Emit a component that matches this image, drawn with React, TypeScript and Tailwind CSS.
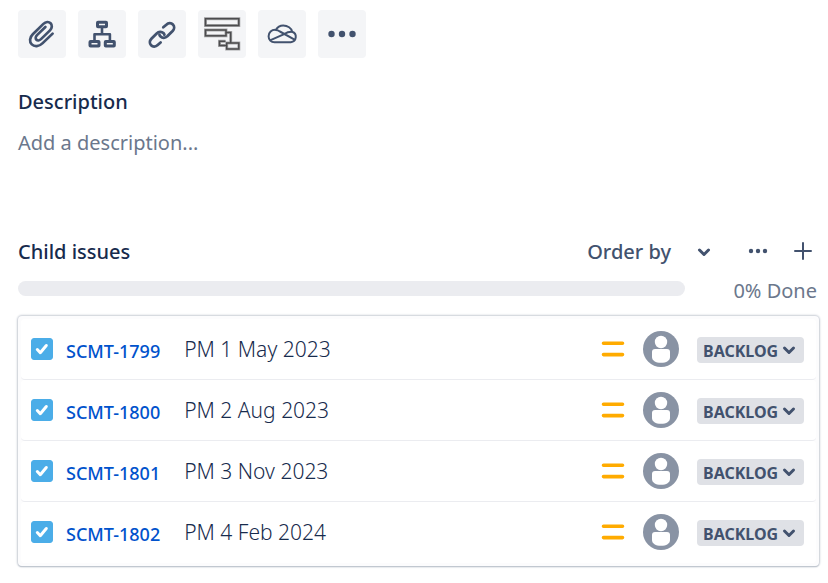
import { useState } from 'react'

type Issue = { id: string; title: string; status: string; selected: boolean }

const initialIssues: Issue[] = [
  { id: 'SCMT-1799', title: 'PM 1 May 2023', status: 'BACKLOG', selected: true },
  { id: 'SCMT-1800', title: 'PM 2 Aug 2023', status: 'BACKLOG', selected: true },
  { id: 'SCMT-1801', title: 'PM 3 Nov 2023', status: 'BACKLOG', selected: true },
  { id: 'SCMT-1802', title: 'PM 4 Feb 2024', status: 'BACKLOG', selected: true },
]

function AttachIcon() {
  return (
    <svg width="48" height="48" viewBox="0 0 48 48" fill="none" stroke="currentColor" strokeWidth="2.7" strokeLinecap="round" strokeLinejoin="round">
      <path d="M34.6 23.6 24.4 33.4c-3.4 3.3-8 3.6-10.6 1-2.6-2.6-2.3-7 1-10.2l10.6-10.3c2.3-2.2 5.4-2.4 7.2-.6 1.8 1.8 1.6 4.9-.6 7.1l-9 8.7c-1.5 1.5-3.5 1.7-4.6.6-1.100-1.100-.9-3.100.6-4.600l8.400-8.100" />
    </svg>
  )
}

function ChildIssueIcon() {
  return (
    <svg width="48" height="48" viewBox="0 0 48 48" fill="none" stroke="currentColor" strokeWidth="3" strokeLinejoin="round">
      <rect x="19.5" y="12.2" width="9" height="4.6" rx="0.5" />
      <rect x="12" y="31.5" width="9" height="4.6" rx="0.5" />
      <rect x="27.3" y="31.5" width="9" height="4.6" rx="0.5" />
      <path d="M24 17v7M16.5 31v-6.800h15.400V31" strokeWidth="2.6" />
    </svg>
  )
}

function LinkIcon() {
  return (
    <svg width="48" height="48" viewBox="0 0 48 48" fill="none" stroke="currentColor" strokeWidth="2.8" strokeLinecap="round">
      <path d="M25.3 17.3l3-2.6c2-1.9 4.9-2 6.6-.3 1.7 1.7 1.6 4.6-.3 6.6l-5.3 5.3c-2 1.9-5 2-6.7.3-.5-.5-.9-1.1-1.1-1.8" />
      <path d="M22.6 32.5l-2.9 2.5c-2 1.9-4.9 2-6.6.3-1.7-1.7-1.6-4.6.3-6.6l5.3-5.2c2-1.9 4.9-2.1 6.7-.4.5.5.8 1 1 1.6" />
    </svg>
  )
}

function GanttShapes() {
  return (
    <>
      <rect x="7.5" y="8.7" width="33.3" height="6.8" />
      <rect x="7.5" y="20" width="20.5" height="5.8" />
      <path d="M28 22.5h4.700V33M27.500 31.200H21.500v4.200H28" />
      <rect x="28.7" y="33" width="12.1" height="6" />
    </>
  )
}

function GanttIcon() {
  return (
    <svg width="48" height="48" viewBox="0 0 48 48" fill="none">
      <g stroke="#a8a9ab" strokeWidth="3"><GanttShapes /></g>
      <g stroke="#4c4c4e" strokeWidth="1.5"><GanttShapes /></g>
    </svg>
  )
}

function CloudIcon() {
  return (
    <svg width="48" height="48" viewBox="0 0 48 48" fill="none" stroke="currentColor" strokeWidth="2" strokeLinejoin="round">
      <path d="M16.5 32.2h16.3a5.4 5.4 0 0 0 1.3-10.5C33.6 18 29.5 15.6 25.2 15.6c-3 0-5.8 1.6-7.3 4.3-4.4-.4-7.3 2.7-7.3 6.3 0 3.5 2.5 6 5.9 6z" />
      <path d="M17.700 20c1.600 0 2.800.5 4.200 1.500L37 29.800M12 30.300l14.200-6.200c2.300-1.500 4.900-2.500 8-2.300" />
    </svg>
  )
}

function MoreIcon() {
  return (
    <svg width="48" height="48" viewBox="0 0 48 48" fill="currentColor">
      <circle cx="13.5" cy="24" r="3.2" />
      <circle cx="24" cy="24" r="3.2" />
      <circle cx="34.5" cy="24" r="3.2" />
    </svg>
  )
}

function ChevronIcon({ className = '' }: { className?: string }) {
  return (
    <svg width="14" height="14" viewBox="0 0 14 14" fill="none" stroke="currentColor" strokeWidth="3" strokeLinecap="round" strokeLinejoin="round" className={className}>
      <path d="M2.5 5 7 9.5 11.5 5" />
    </svg>
  )
}

function PriorityIcon() {
  return (
    <svg width="24" height="24" viewBox="0 0 24 24" stroke="#ffab00" strokeWidth="3.6" strokeLinecap="round" role="img" aria-label="Medium priority">
      <path d="M2.5 6.3h19M2.5 17.6h19" />
    </svg>
  )
}

function AvatarIcon() {
  return (
    <svg width="36" height="36" viewBox="0 0 36 36" role="img" aria-label="Unassigned">
      <circle cx="18" cy="18" r="18" fill="#8993a4" />
      <circle cx="18" cy="11" r="6.2" fill="#fff" />
      <path d="M9 21a3 3 0 0 1 3-3h12a3 3 0 0 1 3 3v5c0 3.5-3.5 5.8-9 5.8S9 29.5 9 26z" fill="#fff" />
    </svg>
  )
}

const tools = [
  { label: 'Attach', Icon: AttachIcon },
  { label: 'Add a child issue', Icon: ChildIssueIcon },
  { label: 'Link issue', Icon: LinkIcon },
  { label: 'Gantt chart', Icon: GanttIcon },
  { label: 'OneDrive', Icon: CloudIcon },
  { label: 'More actions', Icon: MoreIcon },
]

export default function App() {
  const [issues, setIssues] = useState<Issue[]>(initialIssues)

  const update = (id: string, patch: Partial<Issue>) => {
    setIssues(issues.map(i => (i.id === id ? { ...i, ...patch } : i)))
  }

  const done = Math.round((issues.filter(i => i.status === 'DONE').length / issues.length) * 100)
  const headingCls = 'text-[20px] leading-7 font-medium text-[#172b4d]'

  return (
    <main className="min-h-screen bg-white pt-[10px] pb-4 pl-[18px] pr-[9px] font-['Noto_Sans','Open_Sans',sans-serif] text-[#42526e]">
      {/* TOOLBAR */}
      <div className="flex gap-3">
        {tools.map(({ label, Icon }) => (
          <button key={label} type="button" aria-label={label} className="size-12 rounded-[4px] bg-[#f4f5f7] hover:bg-[#ebecf0]">
            <Icon />
          </button>
        ))}
      </div>

      {/* DESCRIPTION */}
      <section className="mt-[30px]">
        <h2 className={headingCls}>Description</h2>
        <button type="button" className="mt-[13px] block text-[20px] leading-7 text-[#6b778c]">Add a description...</button>
      </section>

      {/* CHILD ISSUES */}
      <section className="mt-[81px]">
        <div className="flex items-center">
          <h2 className={headingCls}>Child issues</h2>
          <button type="button" aria-haspopup="menu" className="ml-auto flex items-center gap-[26px] text-[20px] leading-7 font-medium">
            Order by
            <ChevronIcon />
          </button>
          <button type="button" aria-label="More" className="ml-9">
            <svg width="22" height="22" viewBox="0 0 22 22" fill="currentColor">
              <circle cx="4" cy="10" r="2.2" />
              <circle cx="11" cy="10" r="2.2" />
              <circle cx="18" cy="10" r="2.2" />
            </svg>
          </button>
          <button type="button" aria-label="Create child issue" className="ml-6 mr-[6px]">
            <svg width="20" height="20" viewBox="0 0 20 20" fill="none" stroke="currentColor" strokeWidth="2" strokeLinecap="round">
              <path d="M10 1v16M2 9h16" />
            </svg>
          </button>
        </div>

        <div className="mt-[11px] flex items-start">
          <div role="progressbar" aria-label="Done" aria-valuenow={done} aria-valuemin={0} aria-valuemax={100} className="mt-1 h-[15px] flex-1 overflow-hidden rounded-full bg-[#ebecf0]">
            <div className="h-full bg-[#36b37e]" style={{ width: `${done}%` }} />
          </div>
          <span className="w-[134px] pr-[2px] text-right text-[20px] leading-7 text-[#6b778c]">{done}% Done</span>
        </div>

        <ul className="mt-[11px] rounded-[4px] bg-[#fcfcfd] px-[3px] pt-[3px] pb-[3px] shadow-[0_0_2px_1px_#c9ced6,0_1px_1px_#a5adba]">
          {issues.map(issue => (
            <li key={issue.id} className="flex h-[61px] items-center rounded-[4px] border-b border-[#ebecf0] bg-white pl-[10px] pr-3 last:border-transparent">
              <label className="grid size-[22px] shrink-0 place-items-center">
                <input
                  type="checkbox"
                  checked={issue.selected}
                  onChange={e => update(issue.id, { selected: e.target.checked })}
                  aria-label={`Select ${issue.id}`}
                  className="col-start-1 row-start-1 size-[22px] appearance-none rounded-[3px] border border-[#4bade8] bg-white checked:bg-[#4bade8]"
                />
                <svg width="22" height="22" viewBox="0 0 22 22" fill="none" stroke="#fff" strokeWidth="3" strokeLinecap="round" strokeLinejoin="round" className="pointer-events-none col-start-1 row-start-1">
                  <path d="M6.3 11.5 9.3 14.7 15.3 7.5" />
                </svg>
              </label>
              <a href={`#${issue.id}`} className="ml-[13px] pt-[3px] text-[18px] leading-6 font-medium text-[#0052cc] hover:underline">{issue.id}</a>
              <span className="ml-6 flex-1 truncate text-[21px] leading-7 font-light text-[#172b4d]">{issue.title}</span>
              <PriorityIcon />
              <span className="ml-[18px]"><AvatarIcon /></span>
              <div className="ml-[18px] mt-[2px] grid items-center text-[#42526e]">
                <select
                  value={issue.status}
                  onChange={e => update(issue.id, { status: e.target.value })}
                  aria-label={`Status of ${issue.id}`}
                  className="col-start-1 row-start-1 h-[26px] w-[107px] appearance-none rounded-[4px] bg-[#dfe1e6] pl-[6px] pt-px text-[16px] leading-6 font-bold"
                >
                  <option>BACKLOG</option>
                  <option>DONE</option>
                </select>
                <ChevronIcon className="pointer-events-none col-start-1 row-start-1 mr-2 justify-self-end" />
              </div>
            </li>
          ))}
        </ul>
      </section>
    </main>
  )
}
